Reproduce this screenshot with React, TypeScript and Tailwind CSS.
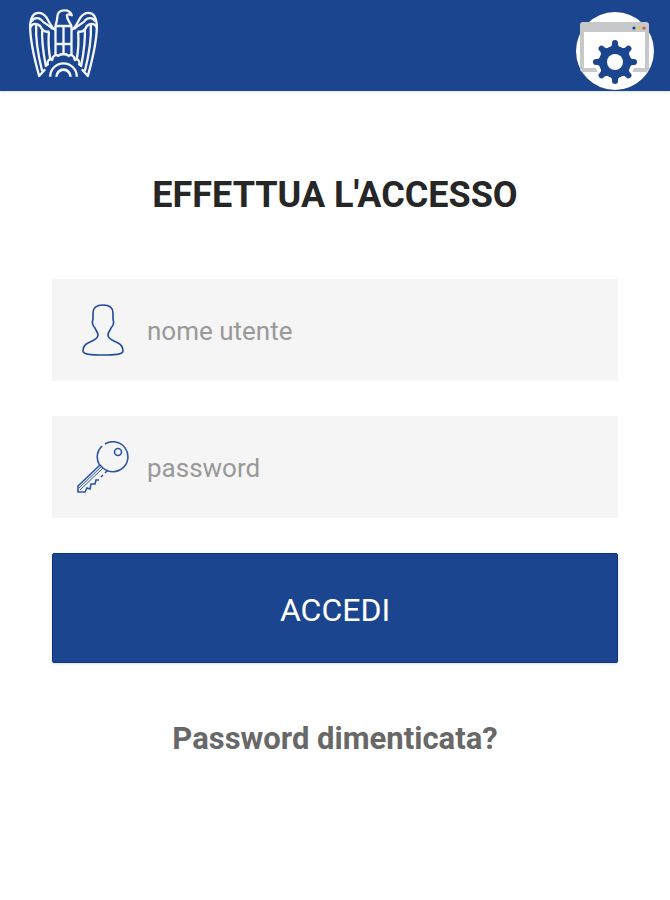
import { useState } from "react";
import type { FormEvent } from "react";

function EagleWing() {
  return (
    <>
      <path d="M104 88 C92 82 86 66 78 52 C70 40 60 36 50 37 C36 38 30 52 28 72 C27 112 40 172 55 226 L73 206" />
      <path d="M28 80 C36 66 48 68 58 76 C64 90 74 96 86 92" />
      <path d="M33 62 C40 50 54 50 62 58 C68 68 84 72 96 86" />
      <path d="M46 72 C44 112 52 164 64 212" />
      <path d="M64 84 C62 122 68 160 75 196 L83 188" />
      <path d="M84 94 C82 124 84 152 88 174" />
      <path d="M104 78 V166" />
    </>
  );
}

function EagleLogo() {
  return (
    <svg
      viewBox="22 22 212 210"
      className="h-[70px] w-[71px]"
      fill="none"
      stroke="#f3f6ff"
      strokeWidth="7"
      strokeLinejoin="round"
      role="img"
      aria-label="Logo"
    >
      <EagleWing />
      <g transform="translate(256 0) scale(-1 1)">
        <EagleWing />
      </g>
      <path d="M104 80 C104 68 109 64 109 52 C109 36 116 30 128 29 C142 28 150 34 153 44 C146 40 140 40 138 44 C138 62 152 66 152 80" />
      <path d="M104 76 H152 M128 76 V164 M104 130 H152" />
      <path d="M80 194 C78 180 86 172 94 178 C96 164 106 160 112 166 C120 158 136 158 144 166 C150 160 160 164 162 178 C170 172 178 180 176 194" />
      <path d="M88 228 A40 40 0 0 1 168 228" />
      <path d="M107 228 A21 21 0 0 1 149 228" strokeWidth="8" />
    </svg>
  );
}

const GEAR_TEETH = [0, 45, 90, 135, 180, 225, 270, 315];

function SettingsIcon() {
  return (
    <svg viewBox="0 0 78 78" className="size-[78px]" aria-hidden="true">
      <circle cx="39" cy="39" r="39" fill="#ffffff" />
      <rect x="4" y="10" width="69" height="50" rx="3" fill="#c7c8ca" />
      <rect x="8" y="20" width="61" height="36" fill="#ffffff" />
      <circle cx="58" cy="16" r="1.6" fill="#1b458f" />
      <circle cx="63" cy="16" r="1.6" fill="#f2c84b" />
      <circle cx="68" cy="16" r="1.6" fill="#e2574c" />
      <circle cx="39" cy="50" r="20" fill="#ffffff" />
      <g fill="#1b458f">
        {GEAR_TEETH.map((angle) => (
          <path
            key={angle}
            d="M31 37 Q36 35 36 32 V31 Q36 28 39 28 Q42 28 42 31 V32 Q42 35 47 37 Z"
            transform={`rotate(${angle} 39 50)`}
          />
        ))}
        <circle cx="39" cy="50" r="16" />
      </g>
      <circle cx="39" cy="50" r="8" fill="#ffffff" />
    </svg>
  );
}

function UserIcon() {
  return (
    <svg
      viewBox="0 0 52 52"
      className="size-[52px] shrink-0"
      fill="none"
      stroke="#1f4a9c"
      strokeWidth="1.6"
      aria-hidden="true"
    >
      <path d="M26 1 C19 1 16 4 16 9 V15 C15 18 15 21 18 24 C19 27 21 28 21 31 C21 36 14 37 11 39 C7 41 6 44 6 47 C6 51 17 51 26 51 C35 51 46 51 46 47 C46 44 45 41 41 39 C38 37 31 36 31 31 C31 28 33 27 34 24 C37 21 37 18 36 15 V9 C36 4 33 1 26 1 Z" />
    </svg>
  );
}

function KeyIcon() {
  return (
    <svg
      viewBox="0 0 52 52"
      className="size-[52px] shrink-0"
      fill="none"
      stroke="#2c56a4"
      strokeWidth="1.6"
      aria-hidden="true"
    >
      <path d="M28 3 A15 15 0 1 1 26 27 L22 23 A15 15 0 0 1 25 5" />
      <circle cx="41" cy="11" r="3.5" />
      <path d="M23 24 L1 45 V51 H8 L10 47 L13 48 L14 43 L18 43 L19 39 L22 39 M24 36 L26 34 M28 32 L31 29" />
      <path d="M26 27 L3 49 M25 25 L2 47" strokeWidth="1" />
    </svg>
  );
}

const FIELD_CLASS =
  "min-w-0 flex-1 bg-transparent pt-0.5 text-[26px] leading-9 text-[#777777] placeholder:text-[#999999] outline-none";

export default function App() {
  const [username, setUsername] = useState("");
  const [password, setPassword] = useState("");

  function handleSubmit(event: FormEvent) {
    event.preventDefault();
  }

  return (
    <div className="min-h-screen bg-white font-[Roboto,sans-serif]">
      <header className="flex items-start justify-between bg-[#1b458f] pl-7 pr-4 pb-px shadow-sm">
        <div className="pt-2">
          <EagleLogo />
        </div>
        <button type="button" aria-label="Impostazioni" className="mt-3 rounded-full">
          <SettingsIcon />
        </button>
      </header>

      <main className="px-[52px] pt-20 text-center">
        <h1 className="text-[36px] leading-12 font-bold text-[#262626]">
          EFFETTUA L'ACCESSO
        </h1>

        <form onSubmit={handleSubmit} className="mt-15 flex flex-col gap-[35px]">
          <label className="flex h-[102px] items-center gap-[18px] bg-[#f5f5f5] px-[25px]">
            <UserIcon />
            <input
              type="text"
              aria-label="nome utente"
              placeholder="nome utente"
              value={username}
              onChange={(event) => setUsername(event.target.value)}
              className={FIELD_CLASS}
            />
          </label>
          <label className="flex h-[102px] items-center gap-[18px] bg-[#f5f5f5] px-[25px]">
            <KeyIcon />
            <input
              type="password"
              aria-label="password"
              placeholder="password"
              value={password}
              onChange={(event) => setPassword(event.target.value)}
              className={FIELD_CLASS}
            />
          </label>
          <button
            type="submit"
            className="h-[110px] rounded-xs border border-[#0d3484] bg-[#1b458f] pt-1 text-[32px] text-white shadow-sm"
          >
            ACCEDI
          </button>
        </form>

        <a
          href="#recupera"
          className="mt-14 inline-block text-[31px] leading-10 font-bold text-[#686868]"
        >
          Password dimenticata?
        </a>
      </main>
    </div>
  );
}
